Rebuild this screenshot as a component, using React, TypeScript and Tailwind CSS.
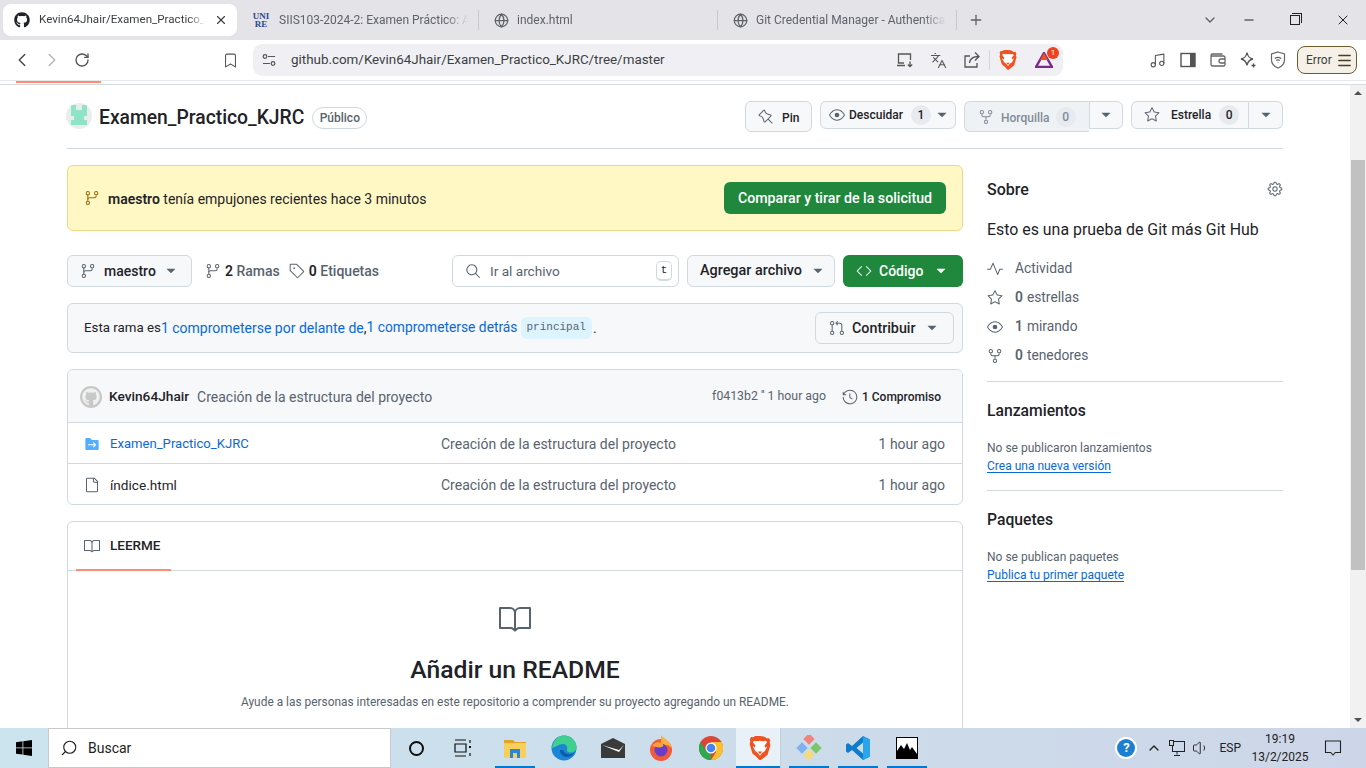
import React from "react";
import {
  GoGitBranch, GoStar, GoEye, GoRepoForked, GoPin, GoTag, GoSearch, GoCode,
  GoGitPullRequest, GoHistory, GoBook, GoFile, GoFileSubmodule, GoPulse, GoGear,
  GoTriangleDown,
} from "react-icons/go";
import { FaGithub } from "react-icons/fa";
import {
  Music, Menu, ChevronLeft, ChevronRight,
  RotateCw, Bookmark, Languages, Globe, X, Plus,
  ChevronDown, Minus, ChevronUp, Volume1, Search,
} from "lucide-react";

const Caret = ({ c = "text-[#59636e]" }: { c?: string }) => <GoTriangleDown className={`${c} shrink-0`} size={16} />;

const Count = ({ n, c = "text-[#1f2328]" }: { n: string; c?: string }) => (
  <span className={`w-[20px] h-[20px] rounded-full bg-[#e7eaee] flex items-center justify-center text-xs ${c}`}>{n}</span>
);

function Tab({ w, icon, text, tm = "ml-[8px]" }: { w: string; icon: React.ReactNode; text: string; tm?: string }) {
  return (
    <div className={`${w} h-[32px] shrink-0 flex items-center pl-[14px]`}>
      <span className="w-[16px] h-[16px] flex items-center justify-center shrink-0">{icon}</span>
      <span className={`${tm} text-xs text-[#5f6368] whitespace-nowrap overflow-hidden flex-1 mr-[10px] [mask-image:linear-gradient(to_right,black_88%,transparent)]`}>{text}</span>
    </div>
  );
}

const Sep = () => <div className="w-px h-[20px] bg-[#c8c8cf] shrink-0" />;

const BraveIcon = ({ s = 18 }: { s?: number }) => (
  <svg width={s} height={s * 1.12} viewBox="0 0 20 23">
    <path d="M10 0l4.2.6 2 1.6 2.2-.2 1.2 2-.6 2 .7 2.4-2.6 9-3.4 2.8L10 23l-3.7-3.8-3.4-2.8-2.6-9 .7-2.4-.6-2 1.2-2 2.2.2 2-1.6z" fill="#f1521f" />
    <path d="M10 4.5l3 .4 2.6-.4 1 1.4-2.3 3 .6 2 2-1.4-2.3 4.4-2.8 2.2L10 18.5 8.2 16l-2.8-2.2-2.3-4.4 2 1.4.6-2-2.3-3 1-1.4 2.6.4z" fill="#fff" />
    <path d="M8 14.5h4L10 17z" fill="#f1521f" />
  </svg>
);

function ChromeBar() {
  return (
    <div className="shrink-0">
      <div className="h-[40px] bg-[#e3e3e8] flex items-center pl-[3px]">
        <div className="w-[234px] h-[32px] shrink-0 flex items-center bg-white rounded-lg pl-[11px]">
          <FaGithub size={16} className="text-[#1f2328] shrink-0" />
          <span className="ml-[9px] w-[166px] text-[11.6px] text-[#3c4043] whitespace-nowrap overflow-hidden [mask-image:linear-gradient(to_right,black_90%,transparent)]">Kevin64Jhair/Examen_Practico_KJRC</span>
          <X size={14} strokeWidth={2} className="ml-[9px] text-[#3c4043]" />
        </div>
        <Tab w="w-[241px]" tm="ml-[12px]" icon={<span className="text-[9px] leading-[8px] font-bold text-[#2b4b8e] font-['Liberation_Serif',serif] text-center ml-[4px]">UNI<br />RE</span>} text="SIIS103-2024-2: Examen Práctico: Aplicación" />
        <Sep />
        <Tab w="w-[238px]" icon={<Globe size={15} className="text-[#5f6368]" />} text="index.html" />
        <Sep />
        <Tab w="w-[238px]" icon={<Globe size={15} className="text-[#5f6368]" />} text="Git Credential Manager - Authentication" />
        <Sep />
        <Plus size={16} className="text-[#5f6368] ml-[11px]" />
        <div className="flex-1" />
        <ChevronDown size={16} className="text-[#5f6368]" />
        <Minus size={14} className="text-[#222] ml-[24px]" />
        <div className="ml-[34px] w-[10px] h-[10px] border border-[#222] relative">
          <div className="absolute -top-[3px] left-[1px] w-[10px] h-[10px] border-t border-r border-[#222]" />
        </div>
        <X size={16} strokeWidth={1.5} className="text-[#222] ml-[35px] mr-[15px]" />
      </div>
      <div className="h-[40px] bg-white flex items-center">
        <ChevronLeft size={22} strokeWidth={1.5} className="text-[#444] ml-[11px]" />
        <ChevronRight size={22} strokeWidth={1.5} className="text-[#b5b5b5] ml-[8px]" />
        <RotateCw size={16} className="text-[#555] ml-[11px]" />
        <Bookmark size={17} strokeWidth={1.5} className="text-[#555] ml-[132px]" />
        <div className="w-[810px] h-[32px] bg-[#f0f0f4] rounded-[9px] ml-[14px] flex items-center pl-[9px]">
          <svg width="14" height="14" viewBox="0 0 14 14" fill="none" stroke="#555" strokeWidth="1.2">
            <circle cx="3" cy="3.500" r="1.800" /><path d="M6 3.500h7M1 10.500h7" /><circle cx="11" cy="10.500" r="1.800" />
          </svg>
          <span className="ml-[15px] text-[13.4px] text-[#3c4043] whitespace-nowrap">github.com/Kevin64Jhair/Examen_Practico_KJRC/tree/master</span>
          <div className="flex-1" />
          <svg width="18" height="16" viewBox="0 0 18 16" fill="none" stroke="#555" strokeWidth="1.3"><path d="M8 11H2.500V2h12v6M1 13.500h8M14 9.500v5M11.800 12.500l2.200 2.200 2.200-2.200" /></svg>
          <Languages size={17} strokeWidth={1.5} className="text-[#555] ml-[16px]" />
          <svg width="18" height="18" viewBox="0 0 18 18" fill="none" stroke="#555" strokeWidth="1.3" className="ml-[16px]"><path d="M7 5H2v11h12v-4M6.500 12C7 7.500 10 5.500 15.500 5.500M12 1.500l4 4-4 4" /></svg>
          <div className="w-px h-[20px] bg-[#d5d5da] ml-[8px]" />
          <span className="ml-[9px]"><BraveIcon /></span>
          <div className="relative ml-[18px] mr-[10px]">
            <svg width="18" height="16" viewBox="0 0 18 16"><path d="M9 1l8 14H1z" fill="none" stroke="#7b2a8c" strokeWidth="2.4" /><path d="M9 1l4 7H5z" fill="#f1521f" /></svg>
            <span className="absolute -top-[5px] -right-[6px] w-[12px] h-[12px] rounded-full bg-[#f1421f] text-white text-[8px] leading-[12px] text-center">1</span>
          </div>
        </div>
        <Music size={17} strokeWidth={1.5} className="text-[#555] ml-[86px]" />
        <svg width="16" height="16" viewBox="0 0 16 16" className="ml-[14px]"><rect x="1" y="1.500" width="14" height="13" fill="#fff" stroke="#555" strokeWidth="1.400" /><rect x="10" y="1.500" width="5" height="13" fill="#555" /></svg>
        <svg width="16" height="16" viewBox="0 0 16 16" fill="none" stroke="#666" strokeWidth="1.300" className="ml-[14px]"><path d="M1 4v8.500a1.500 1.500 0 0 0 1.500 1.500h11a1.500 1.500 0 0 0 1.500-1.500v-7A1.500 1.500 0 0 0 13.500 4H2.500A1.500 1.500 0 0 1 1 3.500 1.500 1.500 0 0 1 2.500 2h10" /><path d="M15 7h-4a2 2 0 0 0 0 4h4" /></svg>
        <svg width="18" height="18" viewBox="0 0 18 18" fill="none" stroke="#555" strokeWidth="1.300" className="ml-[13px]"><path d="M8 1.500c.7 4 2.500 6 6 6.500-3.500.7-5.300 2.500-6 6.500-.7-4-2.500-5.800-6-6.500 3.500-.5 5.300-2.500 6-6.500z" /><path d="M14.500 12.500v4M12.500 14.500h4" /></svg>
        <svg width="16" height="18" viewBox="0 0 16 18" fill="none" stroke="#666" strokeWidth="1.200" className="ml-[13px]"><path d="M8 1l6.500 2v6c0 4-3 6.500-6.500 8-3.500-1.500-6.500-4-6.500-8V3z" /><path d="M4.800 7.500c2-1.500 4.400-1.500 6.400 0M6.200 9.500c1.100-.8 2.500-.8 3.600 0M8 11.500v.6" /></svg>
        <div className="ml-[11px] w-[60px] h-[28px] rounded-lg border border-[#6b5a2a] bg-[#f5f1e8] flex items-center pl-[8px] text-xs text-[#3c3c3c]">
          <span>Error</span><Menu size={17} className="ml-[4px] text-[#4a3f1d]" />
        </div>
      </div>
      <div className="h-[5px] bg-white border-t border-t-[#e8e8ec] border-b border-b-[#d5dbe3] relative">
        <div className="absolute left-[16px] top-0 w-[85px] h-[2px] bg-[#fd8c73]" />
      </div>
    </div>
  );
}

function BtnBox({ children, cls = "" }: { children: React.ReactNode; cls?: string }) {
  return <div className={`flex items-center border border-[#d1d9e0] font-medium ${cls}`}>{children}</div>;
}
const GB = "bg-[#f6f8fa] text-[#1f2328]";

function RepoHeader() {
  return (
    <div className="flex items-start h-[64px] border-b border-[#d1d9e0]">
      <div className="flex items-center mt-[18px] h-[26px] -ml-[1px]">
        <div className="w-[26px] h-[26px] rounded-full bg-[#e9eeec] overflow-hidden flex items-center justify-center">
          <svg width="26" height="26" viewBox="0 0 26 26"><path d="M5 2h5v5h6V2h5v11h-3v4h3v5H5v-5h3v-4H5z" fill="#8fe3c6" /></svg>
        </div>
        <span className="ml-[7px] text-[19.3px] font-medium text-[#1f2328] pt-[4px]">Examen_Practico_KJRC</span>
        <span className="ml-[8px] mt-[4px] h-[22px] w-[55px] justify-center flex items-center rounded-full border border-[#d1d9e0] text-xs text-[#59636e] font-medium">Público</span>
      </div>
      <div className="flex-1" />
      <div className="flex items-start gap-[8px] mt-[16px] text-xs">
        <BtnBox cls={`${GB} ml-[1px] w-[67px] h-[31px] rounded-md pl-[12px] gap-[8px]`}><GoPin size={16} className="text-[#59636e]" /><span className="mt-[3px]">Pin</span></BtnBox>
        <BtnBox cls={`${GB} w-[136px] h-[28px] rounded-md pl-[8px]`}>
          <GoEye size={16} className="text-[#59636e]" />
          <span className="ml-[4px]">Descuidar</span>
          <span className="ml-[8px]"><Count n="1" /></span>
          <span className="ml-[3px]"><Caret /></span>
        </BtnBox>
        <div className="flex items-start">
          <BtnBox cls="w-[125px] h-[31px] rounded-l-md border-r-0 pl-[13px] bg-[#eff2f5] text-[#818b98]">
            <GoRepoForked size={16} />
            <span className="ml-[7px] mt-[3px]">Horquilla</span>
            <span className="ml-[6px]"><Count n="0" c="text-[#818b98]" /></span>
          </BtnBox>
          <BtnBox cls={`${GB} w-[34px] h-[28px] rounded-r-md justify-center`}><Caret /></BtnBox>
        </div>
        <div className="flex items-start">
          <BtnBox cls={`${GB} w-[118px] h-[28px] rounded-l-md pl-[12px]`}>
            <GoStar size={16} className="text-[#59636e]" />
            <span className="ml-[11px]">Estrella</span>
            <span className="ml-[8px]"><Count n="0" /></span>
          </BtnBox>
          <BtnBox cls={`${GB} w-[34px] h-[28px] rounded-r-md border-l-0 justify-center`}><Caret /></BtnBox>
        </div>
      </div>
    </div>
  );
}

function MainColumn() {
  const link = "text-[#0969da]";
  return (
    <div className="w-[896px] shrink-0">
      <div className="h-[66px] rounded-md border border-[#eed888] bg-[#fff8c5] flex items-center pl-[16px] pr-[16px] text-sm text-[#1f2328]">
        <GoGitBranch size={16} className="text-[#9a6700]" />
        <span className="ml-[8px] pt-[2px]"><b className="font-semibold">maestro</b> tenía empujones recientes hace 3 minutos</span>
        <div className="flex-1" />
        <div className="h-[32px] w-[222px] justify-center rounded-md bg-[#1f883d] text-white text-[14.2px] font-medium flex items-center whitespace-nowrap pt-[1px]">Comparar y tirar de la solicitud</div>
      </div>

      <div className="mt-[24px] h-[32px] flex items-center text-sm">
        <BtnBox cls={`${GB} w-[125px] h-[32px] rounded-md pl-[12px]`}>
          <GoGitBranch size={16} className="text-[#59636e]" />
          <span className="ml-[8px]">maestro</span>
          <span className="ml-[7px]"><Caret /></span>
        </BtnBox>
        <GoGitBranch size={16} className="text-[#59636e] ml-[13px]" />
        <span className="ml-[4px] font-medium text-[#59636e]"><b className="font-semibold text-[#1f2328]">2</b> Ramas</span>
        <GoTag size={16} className="text-[#59636e] ml-[9px]" />
        <span className="ml-[4px] font-medium text-[#59636e]"><b className="font-semibold text-[#1f2328]">0</b> Etiquetas</span>
        <div className="flex-1" />
        <div className="w-[227px] h-[32px] rounded-md border border-[#d1d9e0] bg-white flex items-center pl-[12px] pr-[6px] text-[13.6px] text-[#59636e]">
          <GoSearch size={16} />
          <span className="ml-[9px] pt-[1px]">Ir al archivo</span>
          <div className="flex-1" />
          <span className="w-[16px] h-[20px] rounded-[5px] border border-b-2 border-[#d1d9e0] flex items-center justify-center text-[11px] font-['Liberation_Mono',monospace] text-[#1f2328]">t</span>
        </div>
        <BtnBox cls={`${GB} ml-[8px] w-[148px] h-[32px] rounded-md pl-[12px]`}>
          <span className="text-[14.4px]">Agregar archivo</span>
          <span className="ml-[8px]"><Caret /></span>
        </BtnBox>
        <div className="ml-[8px] w-[120px] h-[32px] rounded-md bg-[#1f883d] text-white font-medium flex items-center pl-[13px]">
          <GoCode size={16} />
          <span className="ml-[7px]">Código</span>
          <span className="ml-[10px]"><Caret c="text-white" /></span>
        </div>
      </div>

      <div className="mt-[16px] h-[50px] rounded-md border border-[#d1d9e0] bg-[#f6f8fa] flex items-center pl-[16px] pr-[8px] text-sm text-[#1f2328]">
        <span className="text-[13.3px]">Esta rama es</span><span className={link}>1 comprometerse por delante de</span><span>,</span>
        <span className={`${link} text-[13.8px]`}>1 comprometerse detrás</span>
        <span className="ml-[3px] h-[22px] px-[6px] rounded-md bg-[#ddf4ff] text-[#59636e] text-[11px] font-['Liberation_Mono',monospace] flex items-center">principal</span>
        <span className="ml-[1px]">.</span>
        <div className="flex-1" />
        <BtnBox cls={`${GB} w-[139px] h-[32px] rounded-md pl-[13px]`}>
          <GoGitPullRequest size={16} className="text-[#59636e]" />
          <span className="ml-[7px] text-[14.3px]">Contribuir</span>
          <span className="ml-[8px]"><Caret /></span>
        </BtnBox>
      </div>

      <div className="mt-[16px] rounded-md border border-[#d1d9e0] overflow-hidden">
        <div className="h-[53px] bg-[#f6f8fa] border-b border-[#d1d9e0] flex items-center pl-[12px] pr-[21px] text-sm pt-[2px]">
          <div className="w-[22px] h-[22px] rounded-full bg-[#c8c8c8] flex items-center justify-center">
            <FaGithub size={18} className="text-[#f0f0f0]" />
          </div>
          <span className="ml-[7px] text-[13.7px] font-medium text-[#1f2328]">Kevin64Jhair</span>
          <span className="ml-[8px] text-[#59636e]">Creación de la estructura del proyecto</span>
          <div className="flex-1" />
          <span className="text-[12.3px] text-[#59636e]">f0413b2 '' 1 hour ago</span>
          <GoHistory size={16} className="text-[#59636e] ml-[16px]" />
          <span className="ml-[4px] text-xs font-medium text-[#1f2328]">1 Compromiso</span>
        </div>
        <div className="h-[41px] border-b border-[#d1d9e0] flex items-center pl-[16px] pr-[17px] text-sm pt-[2px]">
          <GoFileSubmodule size={16} className="text-[#54aeff]" />
          <span className={`ml-[10px] w-[331px] text-[13.1px] pt-[1px] ${link}`}>Examen_Practico_KJRC</span>
          <span className="text-[#59636e]">Creación de la estructura del proyecto</span>
          <div className="flex-1" />
          <span className="text-[#59636e]">1 hour ago</span>
        </div>
        <div className="h-[40px] flex items-center pl-[16px] pr-[17px] text-sm pt-[2px]">
          <GoFile size={16} className="text-[#59636e]" />
          <span className="ml-[10px] w-[331px] text-[13.6px] pt-[1px] text-[#1f2328]">índice.html</span>
          <span className="text-[#59636e]">Creación de la estructura del proyecto</span>
          <div className="flex-1" />
          <span className="text-[#59636e]">1 hour ago</span>
        </div>
      </div>

      <div className="mt-[16px] rounded-t-md border border-[#d1d9e0] h-[300px]">
        <div className="h-[49px] border-b border-[#d1d9e0] pl-[8px]">
          <div className="w-[95px] h-[49px] border-b-2 border-[#fd8c73] flex items-center pl-[8px] text-[13.5px] font-medium text-[#1f2328]">
            <GoBook size={16} className="text-[#59636e]" />
            <span className="ml-[10px]">LEERME</span>
          </div>
        </div>
        <div className="flex flex-col items-center pt-[32px]">
          <GoBook size={32} className="text-[#59636e]" />
          <div className="mt-[19px] text-[24.7px] leading-[32px] font-medium text-[#1f2328]">Añadir un README</div>
          <div className="mt-[8px] text-[11.9px] text-[#59636e]">Ayude a las personas interesadas en este repositorio a comprender su proyecto agregando un README.</div>
        </div>
      </div>
    </div>
  );
}

function SideStat({ icon, n, t }: { icon: React.ReactNode; n?: string; t: string }) {
  return (
    <div className="h-[29px] flex items-center text-[13.8px] text-[#59636e]">
      <span className="w-[28px] shrink-0 flex">{icon}</span>
      {n && <b className="font-semibold mr-[4px]">{n}</b>}
      <span>{t}</span>
    </div>
  );
}

function Sidebar() {
  return (
    <div className="w-[296px] shrink-0 text-[#1f2328]">
      <div className="flex items-center justify-between h-[22px] mt-[13px]">
        <span className="text-base font-medium pt-[2px]">Sobre</span>
        <GoGear size={16} className="text-[#59636e]" />
      </div>
      <div className="mt-[19px] text-[15.9px] leading-[22px]">Esto es una prueba de Git más Git Hub</div>
      <div className="mt-[13px]">
        <SideStat icon={<GoPulse size={16} />} t="Actividad" />
        <SideStat icon={<GoStar size={16} />} n="0" t="estrellas" />
        <SideStat icon={<GoEye size={16} />} n="1" t="mirando" />
        <SideStat icon={<GoRepoForked size={16} />} n="0" t="tenedores" />
      </div>
      <div className="mt-[11px] border-t border-[#d1d9e0]" />
      <div className="mt-[18px] text-[15.7px] font-medium leading-[22px]">Lanzamientos</div>
      <div className="mt-[17px] text-xs text-[#59636e] leading-[18px]">No se publicaron lanzamientos</div>
      <div className="text-xs text-[#0969da] leading-[18px] underline underline-offset-2">Crea una nueva versión</div>
      <div className="mt-[15px] border-t border-[#d1d9e0]" />
      <div className="mt-[18px] text-[15.7px] font-medium leading-[22px]">Paquetes</div>
      <div className="mt-[17px] text-xs text-[#59636e] leading-[18px]">No se publican paquetes</div>
      <div className="text-xs text-[#0969da] leading-[18px] underline underline-offset-2">Publica tu primer paquete</div>
    </div>
  );
}

function Scrollbar() {
  return (
    <div className="w-[16px] shrink-0 bg-[#f1f1f1] flex flex-col items-center">
      <div className="h-[16px] flex items-center justify-center">
        <div className="w-0 h-0 border-l-[4px] border-r-[4px] border-b-[4px] border-l-transparent border-r-transparent border-b-[#505050]" />
      </div>
      <div className="mt-[59px] w-[14px] h-[410px] bg-[#c1c1c1]" />
      <div className="flex-1" />
      <div className="h-[16px] flex items-center justify-center">
        <div className="w-0 h-0 border-l-[4px] border-r-[4px] border-t-[4px] border-l-transparent border-r-transparent border-t-[#505050]" />
      </div>
    </div>
  );
}

const TB = ({ w, active, under, children }: { w: string; active?: boolean; under?: boolean; children: React.ReactNode }) => (
  <div className={`${w} h-[40px] shrink-0 flex items-center justify-center relative ${active ? "bg-[#e8f1f7] border-r border-[#c3cfdc]" : ""}`}>
    {children}
    {under && <div className="absolute bottom-0 left-0 right-0 h-[2px] bg-[#0078d4]" />}
  </div>
);

function Taskbar() {
  return (
    <div className="h-[40px] shrink-0 flex items-center bg-gradient-to-r from-[#cbe4ee] to-[#cdd6e8]">
      <div className="w-[48px] flex justify-center">
        <svg width="16" height="16" viewBox="0 0 16 16" fill="#000"><path d="M0 2.2l6.5-.9v6.2H0zM7.3 1.2L16 0v7.5H7.3zM0 8.3h6.5v6.3L0 13.7zM7.3 8.3H16V16l-8.7-1.2z" /></svg>
      </div>
      <div className="w-[343px] h-[40px] bg-white border border-[#c9c9c9] flex items-center pl-[11px]">
        <Search size={18} strokeWidth={1.5} className="text-[#222] -scale-x-100" />
        <span className="ml-[10px] text-sm text-[#222]">Buscar</span>
      </div>
      <TB w="w-[50px]"><div className="w-[15px] h-[15px] rounded-full border-2 border-[#111]" /></TB>
      <TB w="w-[43px]">
        <svg width="18" height="18" viewBox="0 0 18 18" fill="none" stroke="#111" strokeWidth="1.2"><path d="M1 1h11M1 17h11M1 5h11v8H1zM16 1v3M16 14v3" /><rect x="15" y="7" width="2" height="2" fill="#111" stroke="none" /></svg>
      </TB>
      <div className="w-[11px]" />
      <TB w="w-[40px]" under>
        <svg width="22" height="20" viewBox="0 0 22 20"><path d="M0 2h9l2 2h11v2H0z" fill="#e3a32a" /><path d="M0 5h22v15H0z" fill="#f8cf5a" /><path d="M6 11h10v9h-3v-5H9v5H6z" fill="#2b87d3" /></svg>
      </TB>
      <div className="w-[9px]" />
      <TB w="w-[40px]">
        <svg width="26" height="26" viewBox="0 0 26 26"><circle cx="13" cy="13" r="12.5" fill="#1b86d6" /><path d="M1 13C2 5 8 .5 13 .5c7 0 12.5 5 12.5 12 0 3-3 5-6 5-3 0-4-1.5-3.5-3 1-2.500-1-5.500-4-5.500-4 0-7 3-11 4z" fill="#3fcf8e" /><path d="M9 15c0 4 3 7 7 7 3 0 5-1.500 7-4-2 1-9 3-11-3z" fill="#0c5aa8" /></svg>
      </TB>
      <div className="w-[9px]" />
      <TB w="w-[40px]">
        <svg width="24" height="20" viewBox="0 0 24 20"><path d="M0 6L12 0l12 6v14H0z" fill="#3a3a3a" /><path d="M1 7l17 5 5-5-5 7-17-7z" fill="#fff" /></svg>
      </TB>
      <div className="w-[8px]" />
      <TB w="w-[40px]">
        <svg width="24" height="26" viewBox="0 0 24 26"><circle cx="12" cy="15" r="11" fill="#f25b3a" /><path d="M12 0c2 3 9 6 11 13-3-3-7-4-11-3z" fill="#fbb03b" /><circle cx="12" cy="15" r="6.500" fill="#6a3dc9" /><path d="M3 11c2-3 6-5 9-3 3 1 3 3 1 4-3 1-6 0-10-1z" fill="#f9a03f" /></svg>
      </TB>
      <div className="w-[10px]" />
      <TB w="w-[40px]">
        <svg width="24" height="24" viewBox="0 0 24 24"><circle cx="12" cy="12" r="12" fill="#db4437" /><path d="M12 24A12 12 0 0 1 1.600 6L7 15l5 3z" fill="#2da94f" /><path d="M12 6h10.400A12 12 0 0 1 12 24l5-8z" fill="#fbc02d" /><circle cx="12" cy="12" r="5.500" fill="#fff" /><circle cx="12" cy="12" r="4.300" fill="#4285f4" /></svg>
      </TB>
      <div className="w-[5px]" />
      <TB w="w-[45px]" active under><span className="ml-[3px]"><BraveIcon s={22} /></span></TB>
      <div className="w-[8px]" />
      <TB w="w-[40px]" under>
        <svg width="26" height="26" viewBox="0 0 26 26"><rect x="9" y="0" width="8" height="8" transform="rotate(45 13 4)" fill="#f0837a" /><rect x="2" y="9" width="8" height="8" transform="rotate(45 6 13)" fill="#7fb0f0" /><rect x="16" y="9" width="8" height="8" transform="rotate(45 20 13)" fill="#7cc66a" /><rect x="9" y="16" width="8" height="8" transform="rotate(45 13 20)" fill="#f3da7c" /></svg>
      </TB>
      <div className="w-[9px]" />
      <TB w="w-[40px]" under>
        <svg width="26" height="26" viewBox="0 0 26 26"><path d="M18 1l7 3.500v17L18 25 7 15l-4 3-2-1.500V9.500L3 8l4 3zM18 7.500L11.500 13l6.500 5.500z" fill="#0e7ccb" /><path d="M18 1l7 3.500v17L18 25z" fill="#2aa5ea" /></svg>
      </TB>
      <div className="w-[9px]" />
      <TB w="w-[40px]" under>
        <svg width="22" height="22" viewBox="0 0 22 22"><rect x="0.500" y="0.500" width="21" height="21" fill="#fff" stroke="#000" /><path d="M1 21V14l4-6 3 4 3-6 3 7 2-3 5 7v4z" fill="#000" /></svg>
      </TB>
      <div className="flex-1" />
      <div className="w-[22px] h-[22px] rounded-full bg-white flex items-center justify-center">
        <span className="w-[18px] h-[18px] rounded-full bg-[#1d7fd1] text-white text-[13px] font-bold flex items-center justify-center">?</span>
      </div>
      <ChevronUp size={16} className="text-[#222] ml-[9px]" />
      <svg width="16" height="16" viewBox="0 0 16 16" fill="none" stroke="#222" className="ml-[7px]"><rect x="3.500" y="1.500" width="12" height="10" /><rect x="0.500" y="0.500" width="4" height="5" fill="#cbd8e8" /><path d="M8 11.500v3M5 15.500h6" /></svg>
      <Volume1 size={18} strokeWidth={1.25} className="text-[#222] ml-[7px]" />
      <span className="ml-[9px] text-xs text-[#222]">ESP</span>
      <div className="ml-[13px] w-[52px] flex flex-col items-center text-xs text-[#222] leading-[18px]">
        <span>19:19</span><span>13/2/2025</span>
      </div>
      <svg width="18" height="18" viewBox="0 0 18 18" fill="none" stroke="#222" strokeWidth="1.100" className="ml-[18px] mr-[24px]"><path d="M1.500 2h15v11.500h-5.200L9 16l-2.300-2.500H1.500z" /></svg>
    </div>
  );
}

export default function App() {
  return (
    <div className="h-screen w-[1366px] overflow-hidden flex flex-col bg-white font-['Roboto','Liberation_Sans',sans-serif]">
      <ChromeBar />
      <div className="flex-1 min-h-0 flex">
        <div className="flex-1 min-w-0 overflow-hidden px-[67px]">
          <RepoHeader />
          <div className="mt-[16px] flex gap-[24px]">
            <MainColumn />
            <Sidebar />
          </div>
        </div>
        <Scrollbar />
      </div>
      <Taskbar />
    </div>
  );
}
